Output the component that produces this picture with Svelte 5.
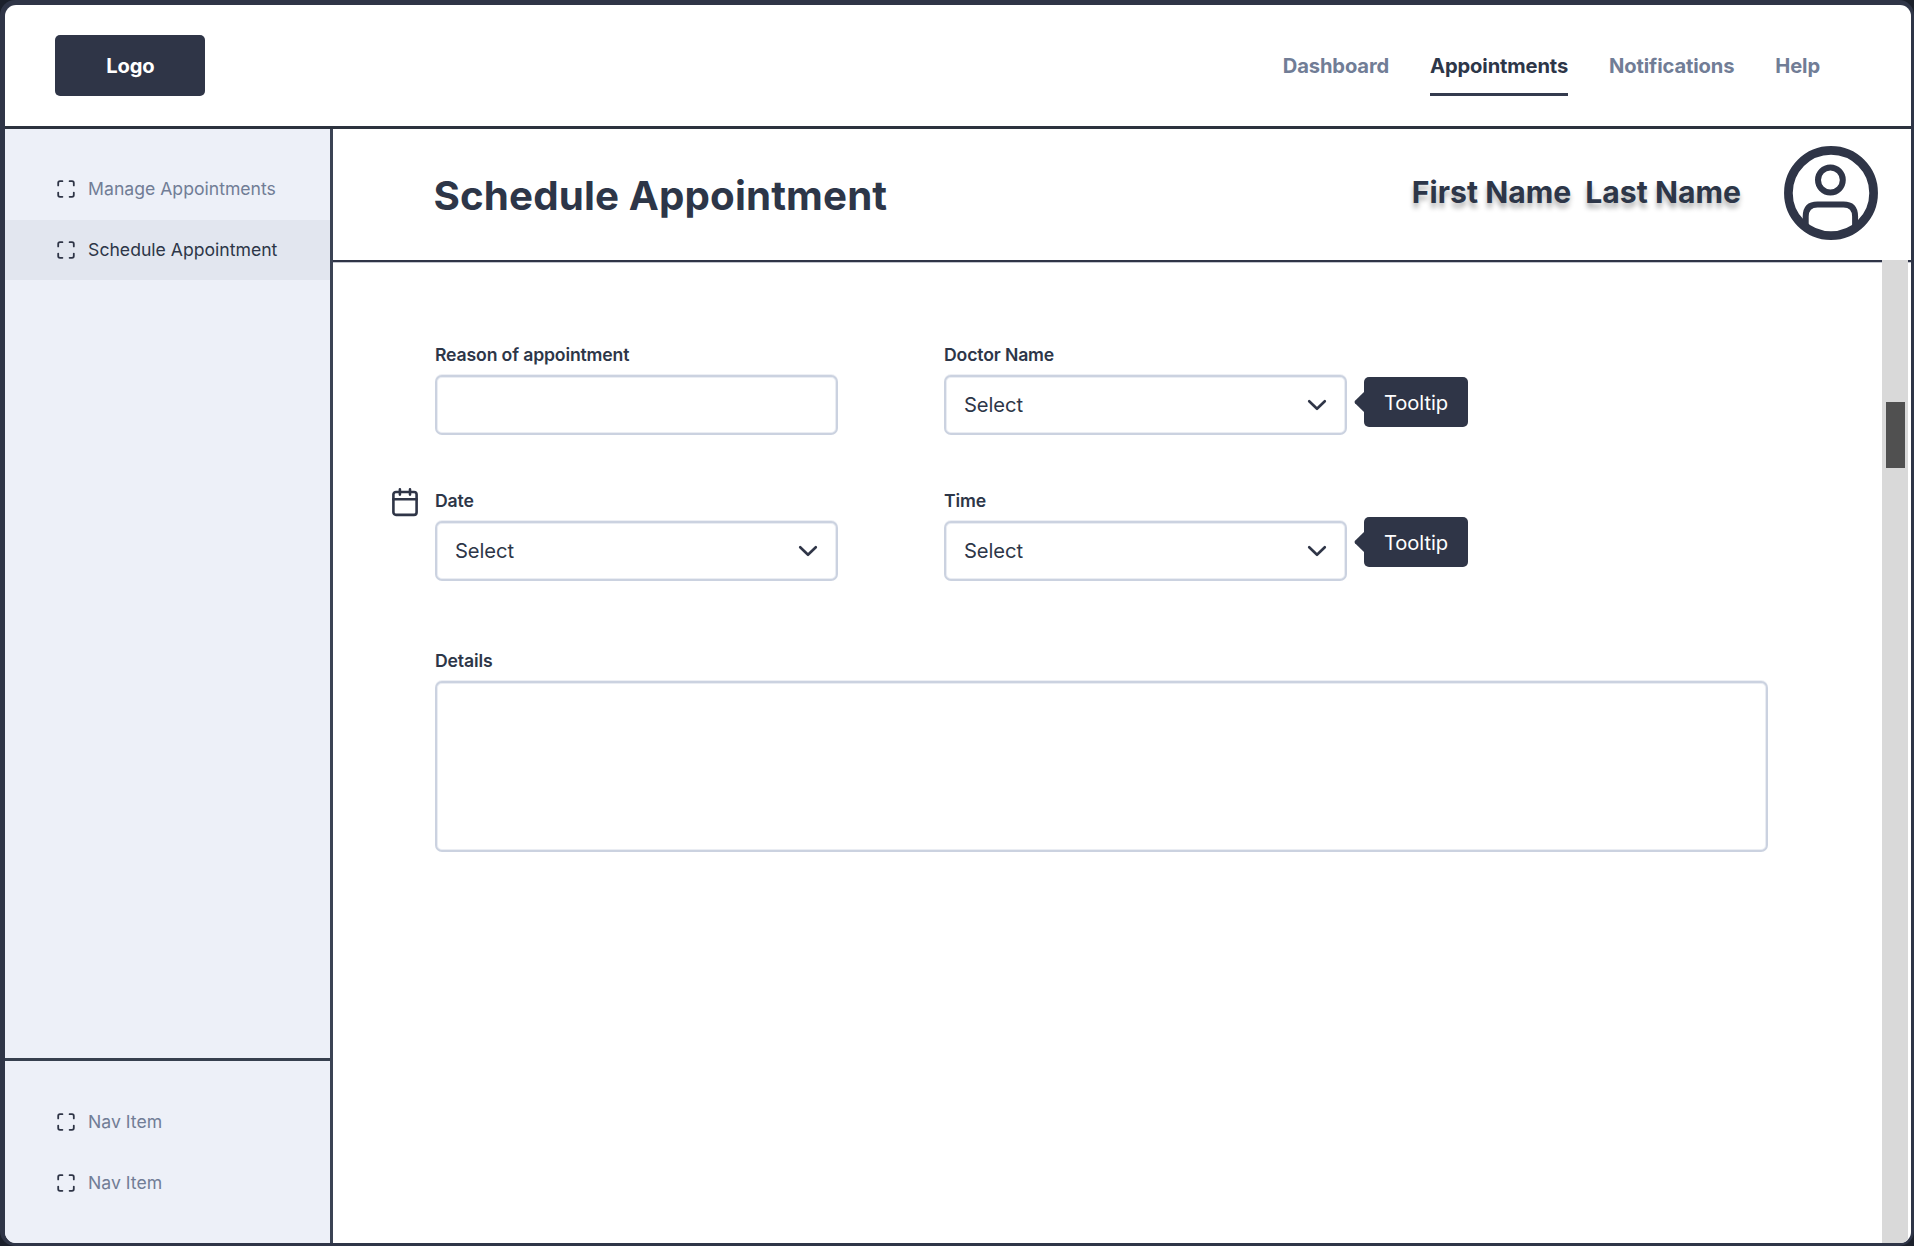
<script>
  const links = ['Dashboard', 'Appointments', 'Notifications', 'Help'];
  const mainItems = ['Manage Appointments', 'Schedule Appointment'];
  const footItems = ['Nav Item', 'Nav Item'];
</script>

{#snippet item(label, active)}
  <a class="item" class:active>
    <svg class="frame-icon" viewBox="0 0 18 18">
      <path d="M1.2 5.4V3Q1.2 1.2 3 1.2H5.4M12.6 1.2H15Q16.8 1.2 16.8 3V5.4M16.8 12.6V15Q16.8 16.8 15 16.8H12.6M5.4 16.8H3Q1.2 16.8 1.2 15V12.6" />
    </svg>
    <span>{label}</span>
  </a>
{/snippet}

{#snippet select()}
  <div class="box select">
    <span>Select</span>
    <svg class="chevron" viewBox="0 0 20 12"><path d="M2.2 2.2L10 9.8L17.8 2.2" /></svg>
  </div>
{/snippet}

{#snippet tooltip()}
  <div class="tooltip">
    <svg class="arrow" viewBox="0 0 11 22"><path d="M11 0V22L1 12.2Q0 11 1 9.8Z" /></svg>
    Tooltip
  </div>
{/snippet}

<div class="window">
  <div class="app">
    <header class="top">
      <div class="logo">Logo</div>
      <nav>
        {#each links as link}
          <a class:current={link === 'Appointments'}>{link}</a>
        {/each}
      </nav>
    </header>
    <div class="body">
      <aside>
        <div class="group">
          {#each mainItems as label, i}{@render item(label, i === 1)}{/each}
        </div>
        <div class="group foot">
          {#each footItems as label}{@render item(label, false)}{/each}
        </div>
      </aside>
      <main>
        <div class="title-bar">
          <h1>Schedule Appointment</h1>
          <div class="user"><span>First Name</span><span>Last Name</span></div>
          <svg class="avatar" viewBox="0 0 94 94">
            <circle cx="47" cy="47" r="42.6" stroke-width="8.7" />
            <circle cx="46.4" cy="34" r="12.4" stroke-width="6" />
            <path d="M21.7 79V70.5Q21.7 58.4 33.5 58.4H59.5Q71.1 58.4 71.1 70.5V79" stroke-width="6" />
          </svg>
        </div>
        <div class="content">
          <form>
            <div class="field">
              <span class="label">Reason of appointment</span>
              <div class="box"></div>
            </div>
            <div class="field">
              <span class="label">Doctor Name</span>
              {@render select()}
              {@render tooltip()}
            </div>
            <div class="field second">
              <svg class="calendar" viewBox="0 0 26 29">
                <rect x="1.4" y="4" width="23.2" height="22.9" rx="2.6" />
                <path d="M1.4 11.3H24.6M7.9 1.4V6.6M18 1.4V6.6" />
              </svg>
              <span class="label">Date</span>
              {@render select()}
            </div>
            <div class="field second raised">
              <span class="label">Time</span>
              {@render select()}
              {@render tooltip()}
            </div>
            <div class="field details">
              <span class="label">Details</span>
              <div class="box area"></div>
            </div>
          </form>
          <div class="scrollbar"><div class="thumb"></div></div>
        </div>
      </main>
    </div>
  </div>
</div>

<style>
  :global(body) { background: #1b202b; }
  * { box-sizing: border-box; }
  .window {
    width: 1914px;
    height: 1246px;
    padding: 5px 3px 3px 5px;
    background: #2f3547;
    border-radius: 15px;
    font-family: Inter, "Liberation Sans", sans-serif;
    color: #2d3648;
    overflow: hidden;
  }
  .app {
    height: 100%;
    display: flex;
    flex-direction: column;
    background: #fff;
    border-radius: 11px;
    overflow: hidden;
  }
  .top {
    height: 124px;
    flex: none;
    display: flex;
    align-items: flex-start;
    justify-content: space-between;
    padding: 30px 91px 0 50.4px;
    border-bottom: 3px solid #2c323e;
  }
  .logo {
    width: 150px;
    height: 61px;
    border-radius: 5px;
    background: #2f3547;
    color: #fff;
    font-size: 20.15px;
    font-weight: 700;
    letter-spacing: -0.15px;
    line-height: 61px;
    text-align: center;
  }
  nav { display: flex; gap: 41px; }
  nav a {
    height: 61px;
    line-height: 61px;
    font-size: 20.15px;
    font-weight: 700;
    letter-spacing: -0.13px;
    color: #717d96;
  }
  nav a.current { color: #2d3648; border-bottom: 3px solid #343b4e; }
  .body { flex: 1; display: flex; min-height: 0; }
  aside {
    width: 328px;
    flex: none;
    display: flex;
    flex-direction: column;
    justify-content: space-between;
    background: #edf0f8;
    border-right: 3px solid #3b4354;
  }
  .group { padding-top: 30px; }
  .foot { height: 185px; border-top: 3px solid #37404f; padding-top: 31px; }
  .item {
    height: 60.5px;
    display: flex;
    align-items: center;
    gap: 13.5px;
    padding-left: 51.6px;
    font-size: 17.63px;
    color: #717d96;
  }
  .item span { margin-top: -1px; }
  .item.active { background: #e2e6ef; color: #2d3648; }
  svg { fill: none; stroke: #2f3547; stroke-linecap: round; stroke-linejoin: round; display: block; }
  .frame-icon { width: 18px; height: 18px; stroke-width: 1.8; }
  main { flex: 1; display: flex; flex-direction: column; min-width: 0; }
  .title-bar {
    height: 133px;
    flex: none;
    display: flex;
    align-items: center;
    padding: 0 33px 0 100.5px;
    border-bottom: 2px solid #2f3547;
    box-shadow: 0 1px 0 #c2c5ce;
  }
  h1 { margin: 3px auto 0 0; font-size: 40.3px; line-height: 50px; font-weight: 700; letter-spacing: 0.13px; }
  .user {
    display: flex;
    gap: 14px;
    margin: -6px 43px 0 0;
    font-size: 30.2px;
    font-weight: 700;
    text-shadow: 0 5px 5px rgba(0, 0, 0, 0.3);
  }
  .avatar { width: 94px; height: 94px; margin-top: -2.5px; }
  .avatar path { stroke-linecap: butt; }
  .content { flex: 1; display: flex; justify-content: space-between; min-height: 0; }
  form {
    display: grid;
    grid-template-columns: 403px 403px;
    column-gap: 106px;
    align-content: start;
    padding: 80px 0 0 102px;
  }
  .field { position: relative; height: 146px; }
  .second { height: 160px; }
  .label { display: block; height: 33px; line-height: 25px; font-size: 17.63px; font-weight: 600; letter-spacing: -0.14px; }
  .box {
    height: 60px;
    border: 2px solid #cbd2e0;
    border-radius: 7px;
    background: #fff;
    box-shadow: 0 -1px 0 rgba(203, 210, 224, 0.35), inset 0 0 0 1px rgba(203, 210, 224, 0.4);
  }
  .select {
    display: flex;
    align-items: center;
    justify-content: space-between;
    padding: 0 18px;
    font-size: 20.15px;
    font-weight: 380;
    letter-spacing: -0.08px;
  }
  .select span { margin-top: -2px; }
  .chevron { width: 20px; height: 12px; stroke-width: 2.6; }
  .details { grid-column: 1 / -1; width: 1333px; height: auto; }
  .area { height: 171px; }
  .tooltip {
    position: absolute;
    left: 420px;
    top: 35px;
    width: 104px;
    height: 50px;
    border-radius: 5px;
    background: #2f3547;
    color: #fff;
    font-size: 20.15px;
    font-weight: 380;
    letter-spacing: -0.08px;
    line-height: 51px;
    text-align: center;
  }
  .raised .tooltip { top: 29px; }
  .arrow { position: absolute; left: -10px; top: 14px; width: 11px; height: 22px; fill: #2f3547; stroke: none; }
  .calendar { position: absolute; left: -43.5px; top: -0.5px; width: 26px; height: 29px; stroke-width: 2.6; }
  .scrollbar {
    position: relative;
    width: 26px;
    margin: -2px 3px 0 0;
    background: #d9d9d9;
    padding: 142px 3px 0 4px;
  }
  .thumb { height: 66px; background: #505050; }
</style>
